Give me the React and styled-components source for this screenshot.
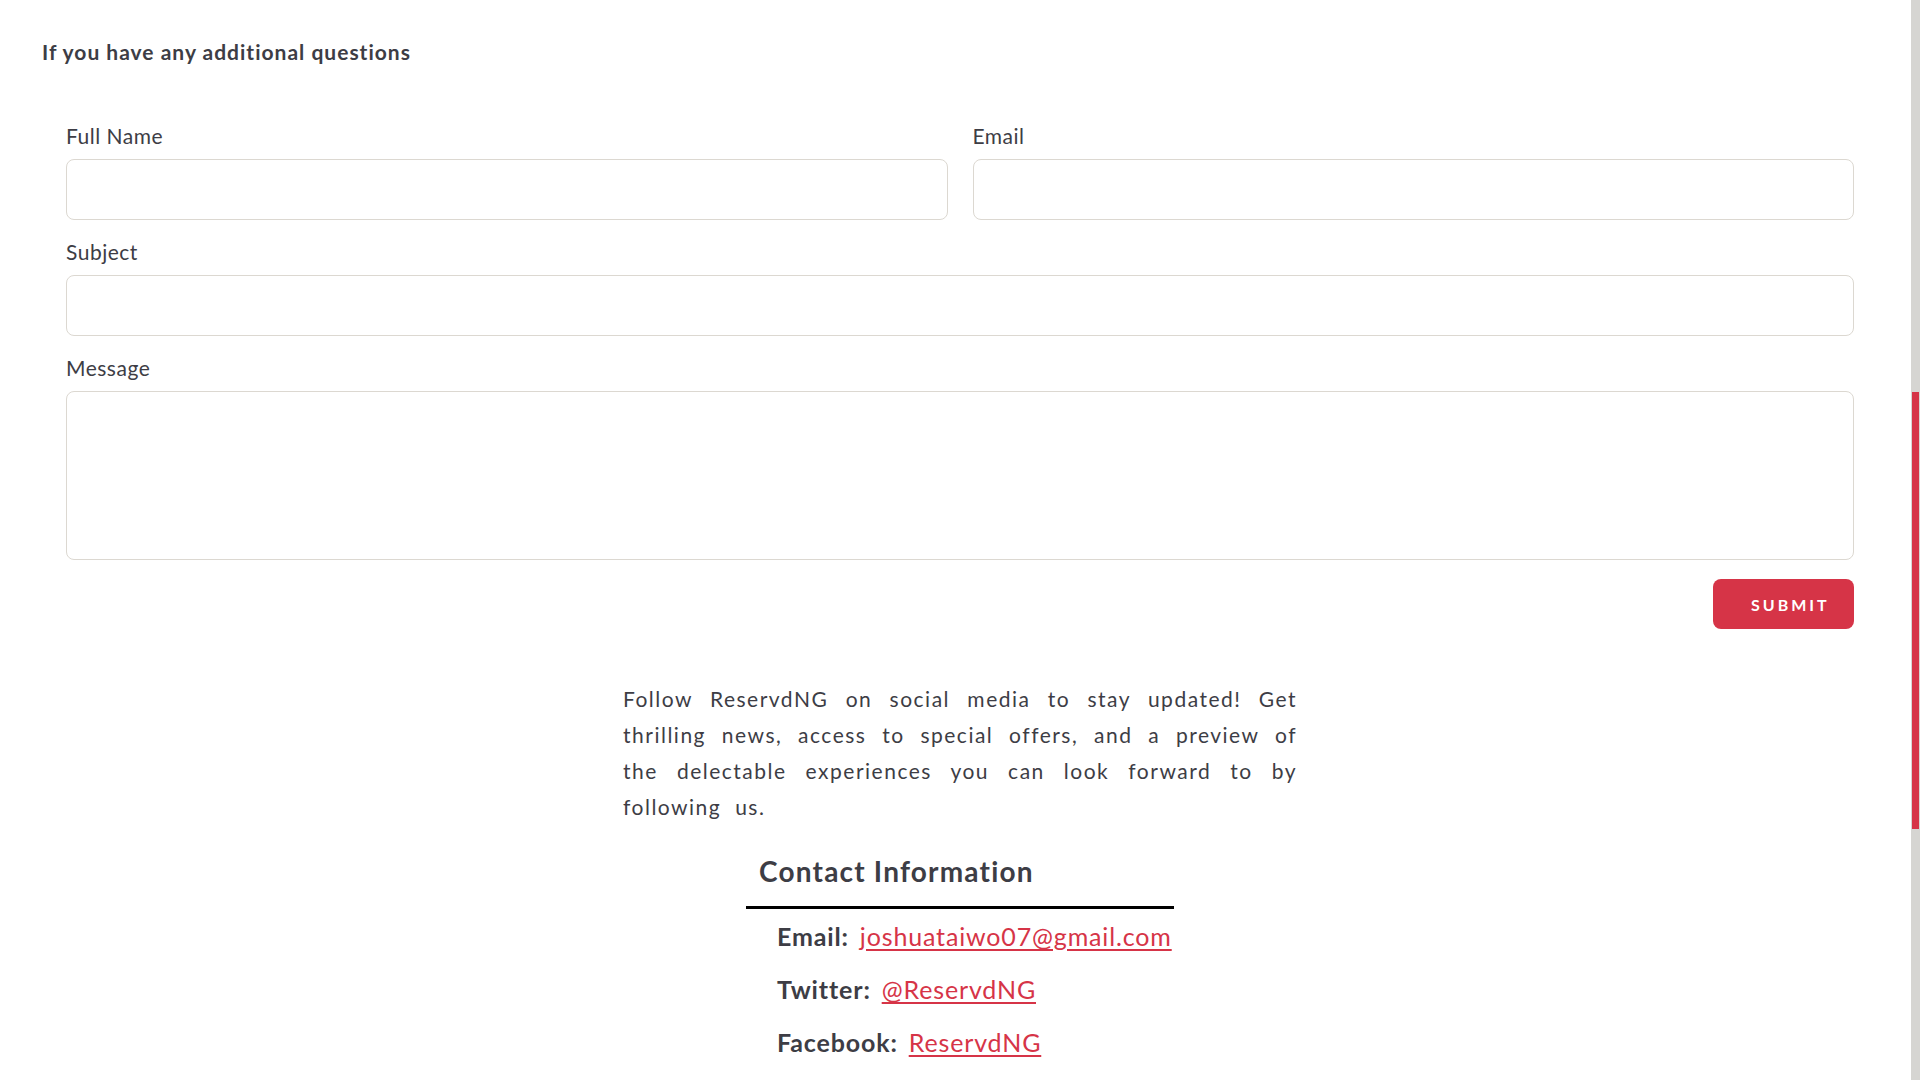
import styled, { createGlobalStyle } from 'styled-components';

const GlobalStyle = createGlobalStyle`
    * {
        box-sizing: border-box;
    }

    html, body {
        margin: 0;
        padding: 0;
        background: #ffffff;
        overflow: hidden;
    }

    body {
        font-family: 'Lato', 'Open Sans', sans-serif;
        color: #3d3d45;
    }
`;

const Page = styled.main`
    width: 1920px;
    padding: 40px 0 0;
`;

const Heading = styled.h3`
    margin: 0 0 60px 42px;
    font-size: 21px;
    font-weight: 700;
    line-height: 24px;
    letter-spacing: 1px;
`;

const Form = styled.form`
    display: flex;
    flex-direction: column;
    gap: 20px;
    padding: 0 66px;
`;

const Row = styled.div`
    display: grid;
    grid-template-columns: 1fr 1fr;
    gap: 25px;
`;

const Field = styled.div`
    display: flex;
    flex-direction: column;
`;

const Label = styled.label`
    font-size: 21px;
    line-height: 24px;
    letter-spacing: 0.5px;
    margin-bottom: 11px;
`;

const Input = styled.input`
    height: 61px;
    width: 100%;
    border: 1px solid #dcd8d1;
    border-radius: 8px;
    background: #fff;
    padding: 0 16px;
    font-family: inherit;
    font-size: 18px;
    outline: none;
`;

const TextArea = styled.textarea`
    height: 169px;
    width: 100%;
    border: 1px solid #dcd8d1;
    border-radius: 8px;
    background: #fff;
    padding: 16px;
    font-family: inherit;
    font-size: 18px;
    resize: none;
    outline: none;
`;

const Actions = styled.div`
    display: flex;
    justify-content: flex-end;
    margin-top: -1px;
`;

const SubmitButton = styled.button`
    height: 50px;
    width: 141px;
    padding: 0 23px 0 38px;
    border: none;
    border-radius: 8px;
    background: #d63447;
    color: #fff;
    font-family: 'Lato', sans-serif;
    font-size: 16px;
    font-weight: 700;
    letter-spacing: 3px;
    text-align: left;
    cursor: pointer;
`;

const Social = styled.section`
    display: flex;
    flex-direction: column;
    align-items: center;
    margin-top: 52px;
`;

const Blurb = styled.p`
    width: 674px;
    margin: 0;
    font-size: 21px;
    line-height: 36px;
    text-align: justify;
    letter-spacing: 1.5px;
    word-spacing: 7px;
`;

const Contact = styled.div`
    width: 428px;
    margin-top: 30px;
`;

const ContactTitle = styled.h2`
    margin: 0;
    padding: 0 0 19px 13px;
    border-bottom: 3px solid #000;
    font-size: 28px;
    font-weight: 700;
    line-height: 32px;
    letter-spacing: 1.2px;
`;

const ContactList = styled.ul`
    list-style: none;
    margin: 12px 0 0;
    padding: 0 0 0 31px;
    display: flex;
    flex-direction: column;
    gap: 23px;
`;

const ContactItem = styled.li`
    font-size: 25px;
    line-height: 30px;
    letter-spacing: 0.85px;
    white-space: nowrap;
`;

const ContactKey = styled.strong`
    font-weight: 700;
    margin-right: 11px;
`;

const ContactLink = styled.a`
    color: #d63447;
    text-decoration: underline;
    text-underline-offset: 3px;
`;

const ScrollTrack = styled.div`
    position: fixed;
    top: 0;
    right: 0;
    width: 9px;
    height: 100vh;
    background: #d6d5d2;
    padding: 392px 1px 0;
`;

const ScrollThumb = styled.div`
    height: 437px;
    background: #d63447;
`;

const contacts = [
    { key: 'Email:', value: 'joshuataiwo07@gmail.com', href: 'mailto:joshuataiwo07@gmail.com' },
    { key: 'Twitter:', value: '@ReservdNG', href: '#' },
    { key: 'Facebook:', value: 'ReservdNG', href: '#' },
];

export default function App() {
    return (
        <>
            <GlobalStyle />
            <Page>
                <Heading>If you have any additional questions</Heading>

                <Form onSubmit={e => e.preventDefault()}>
                    <Row>
                        <Field>
                            <Label htmlFor='fullname'>Full Name</Label>
                            <Input id='fullname' type='text' />
                        </Field>
                        <Field>
                            <Label htmlFor='email'>Email</Label>
                            <Input id='email' type='email' />
                        </Field>
                    </Row>

                    <Field>
                        <Label htmlFor='subject'>Subject</Label>
                        <Input id='subject' type='text' />
                    </Field>

                    <Field>
                        <Label htmlFor='message'>Message</Label>
                        <TextArea id='message' />
                    </Field>

                    <Actions>
                        <SubmitButton type='submit'>SUBMIT</SubmitButton>
                    </Actions>
                </Form>

                <Social>
                    <Blurb>
                        Follow ReservdNG on social media to stay updated! Get thrilling news, access to special
                        offers, and a preview of the delectable experiences you can look forward to by following us.
                    </Blurb>

                    <Contact>
                        <ContactTitle>Contact Information</ContactTitle>
                        <ContactList>
                            {contacts.map(c => (
                                <ContactItem key={c.key}>
                                    <ContactKey>{c.key}</ContactKey>
                                    <ContactLink href={c.href}>{c.value}</ContactLink>
                                </ContactItem>
                            ))}
                        </ContactList>
                    </Contact>
                </Social>
            </Page>

            <ScrollTrack>
                <ScrollThumb />
            </ScrollTrack>
        </>
    )
}
